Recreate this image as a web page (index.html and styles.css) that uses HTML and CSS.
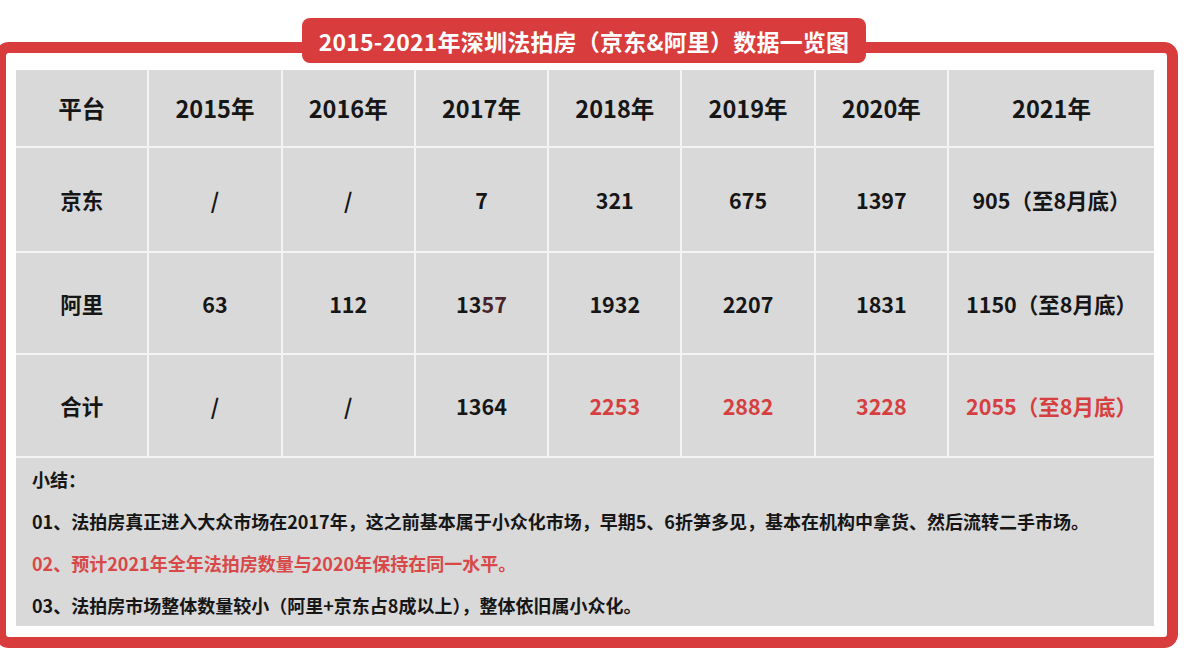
FILE: index.html
```html
<!DOCTYPE html>
<html lang="zh-CN">
<head>
<meta charset="utf-8">
<title>2015-2021年深圳法拍房数据一览图</title>
<link rel="stylesheet" href="styles.css">
</head>
<body>
<div class="page">
  <div class="frame">
    <div class="tab">2015-2021年深圳法拍房（京东&amp;阿里）数据一览图</div>
    <div class="grid">
      <div class="cell head">平台</div>
      <div class="cell head">2015年</div>
      <div class="cell head">2016年</div>
      <div class="cell head">2017年</div>
      <div class="cell head">2018年</div>
      <div class="cell head">2019年</div>
      <div class="cell head">2020年</div>
      <div class="cell head">2021年</div>

      <div class="cell">京东</div>
      <div class="cell">/</div>
      <div class="cell">/</div>
      <div class="cell">7</div>
      <div class="cell">321</div>
      <div class="cell">675</div>
      <div class="cell">1397</div>
      <div class="cell">905（至8月底）</div>

      <div class="cell">阿里</div>
      <div class="cell">63</div>
      <div class="cell">112</div>
      <div class="cell">13<span class="tint">57</span></div>
      <div class="cell">1932</div>
      <div class="cell">2207</div>
      <div class="cell">1831</div>
      <div class="cell">1150（至8月底）</div>

      <div class="cell">合计</div>
      <div class="cell">/</div>
      <div class="cell">/</div>
      <div class="cell">1364</div>
      <div class="cell red">2253</div>
      <div class="cell red">2882</div>
      <div class="cell red">3228</div>
      <div class="cell red">2055（至8月底）</div>

      <div class="summary">
        <p>小结：</p>
        <p>01、法拍房真正进入大众市场在2017年，这之前基本属于小众化市场，早期5、6折笋多见，基本在机构中拿货、然后流转二手市场。</p>
        <p class="red">02、预计2021年全年法拍房数量与2020年保持在同一水平。</p>
        <p>03、法拍房市场整体数量较小（阿里+京东占8成以上），整体依旧属小众化。</p>
      </div>
    </div>
  </div>
</div>
</body>
</html>
```
FILE: styles.css
```css
* { box-sizing: border-box; }
html, body {
  margin: 0;
  padding: 0;
  background: #ffffff;
  width: 1200px;
  height: 660px;
  overflow: hidden;
  font-family: "Noto Sans CJK SC", "Noto Sans", sans-serif;
  color: #161616;
}
.page {
  padding-top: 42px;
}
.frame {
  position: relative;
  margin-left: -5px;
  width: 1183px;
  height: 606px;
  border: 11px solid #d83c3c;
  border-radius: 14px;
  padding: 17px 13px 12px 10px;
  background: #fff;
}
.tab {
  position: absolute;
  left: 296px;
  top: -35px;
  width: 564px;
  height: 45px;
  background: #d83c3c;
  border-radius: 8px;
  color: #fff;
  font-weight: 700;
  font-size: 23px;
  display: flex;
  align-items: center;
  justify-content: center;
  letter-spacing: 0.2px;
}
.grid {
  display: grid;
  grid-template-columns: repeat(7, 1fr) 205px;
  grid-template-rows: 76px 103px 100px 101px 1fr;
  gap: 2px;
  background: #f4f4f4;
  height: 100%;
}
.cell {
  background: #d9d9d9;
  display: flex;
  align-items: center;
  justify-content: center;
  font-weight: 700;
  font-size: 21.5px;
}
.cell.head {
  font-size: 23.5px;
}
.red {
  color: #d63f3f;
}
.tint {
  color: #4a2428;
}
.summary {
  grid-column: 1 / -1;
  background: #d9d9d9;
  padding: 0 16px;
  font-weight: 700;
  font-size: 18px;
  line-height: 42px;
}
.summary p {
  margin: 0;
}
.summary p.red {
  color: #d84848;
}
```
